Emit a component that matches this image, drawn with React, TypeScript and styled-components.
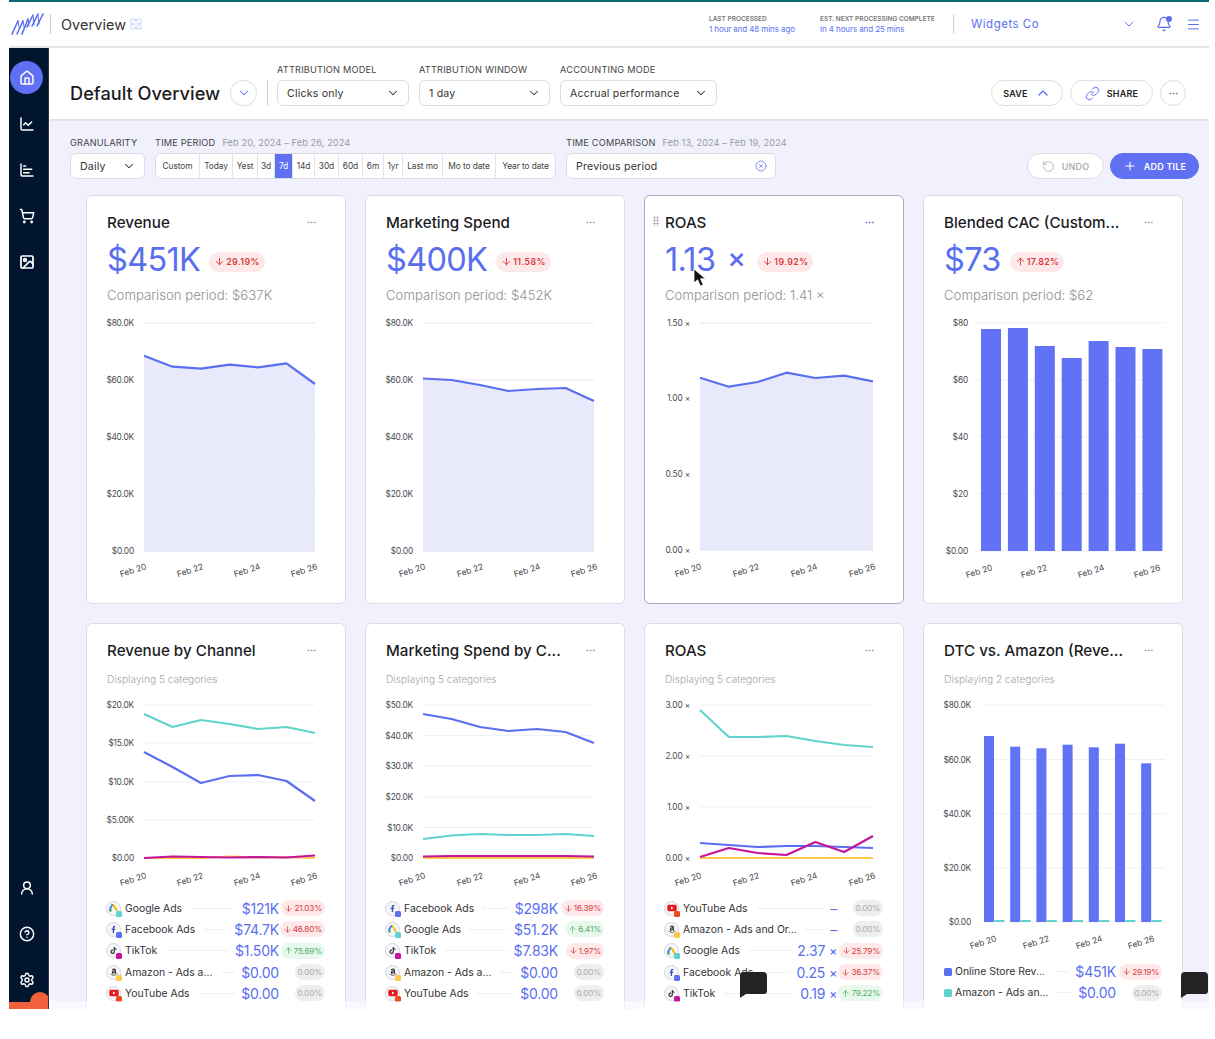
import React from "react";
import styled, { createGlobalStyle } from "styled-components";
import {
  ArrowDown, ArrowUp, Atom, Bell, ChartBar, ChartLine, ChevronDown, ChevronUp, CircleHelp, CircleX,
  Ellipsis, House, Image as ImageIcon, Link as LinkIcon, Menu, Plus, RotateCcw, Settings, ShoppingCart, UserRound,
} from "lucide-react";
import { FaAmazon, FaFacebookF, FaTiktok, FaYoutube } from "react-icons/fa";

const BLUE = "#5a6ff0";
const FONT = `Inter, "Noto Sans", "Liberation Sans", sans-serif`;

const Global = createGlobalStyle`
  html, body { margin: 0; padding: 0; background: #fff; }
  body { font-family: ${FONT}; color: #222; }
  * { box-sizing: border-box; }
`;

const Frame = styled.div`
  position: relative; width: 1200px; height: 1009px; margin-left: 9px; overflow: hidden;
  background: #fff; border-top: 2px solid #0b6a73; display: flex; flex-direction: column;
`;
const TopBar = styled.header`
  height: 46px; flex: none; display: flex; align-items: center; padding-left: 2px;
  background: #fff; border-bottom: 2px solid #e6e6ea;
`;
const Logo = styled.svg` width: 33px; height: 24px; flex: none; `;
const VRule = styled.div<{ $h: number; $ml: number }>`
  width: 1px; height: ${p => p.$h}px; margin-left: ${p => p.$ml}px; background: #cfcfd6; flex: none;
`;
const PageName = styled.div` margin-left: 10px; font-size: 14.4px; color: #333; letter-spacing: .1px; `;
const AtomWrap = styled.span` display: flex; margin-left: 3px; color: #bcc4f6; `;
const TopRight = styled.div` margin-left: auto; display: flex; align-items: center; padding-right: 8px; `;
const Status = styled.div<{ $w: number }>` width: ${p => p.$w}px; line-height: 10px; `;
const StatusLabel = styled.div` font-size: 6.5px; font-weight: 600; color: #777; white-space: nowrap; `;
const StatusValue = styled.div` font-size: 8px; color: ${BLUE}; white-space: nowrap; letter-spacing: -.1px; `;
const Company = styled.div` width: 150px; margin-left: 17px; font-size: 11.5px; color: ${BLUE}; letter-spacing: .5px; `;
const TopIcon = styled.span<{ $ml: number }>`
  position: relative; display: flex; margin-left: ${p => p.$ml}px; color: ${BLUE};
`;
const BellDot = styled.i`
  position: absolute; right: 0; top: 0; width: 6px; height: 6px; border-radius: 50%; background: ${BLUE};
`;

const Body = styled.div` flex: 1; display: flex; min-height: 0; `;
const Side = styled.nav`
  width: 40px; flex: none; background: #02152f; position: relative; overflow: hidden;
  display: flex; flex-direction: column; align-items: center; padding: 13px 0 0 0;
  border-right: 1px solid #333;
  margin-right: 1px;
`;
const SideItem = styled.div<{ $active?: boolean }>`
  width: 33px; height: 33px; flex: none; margin-left: -4px; margin-bottom: 13px; border-radius: 50%;
  display: flex; align-items: center; justify-content: center; color: #fff;
  background: ${p => (p.$active ? "#5f70f3" : "transparent")};
`;
const SideSpacer = styled.div` flex: 1; `;
const OrangeStrip = styled.div`
  position: absolute; left: 0; right: 0; bottom: 0; height: 7px; background: #f0603a;
`;
const OrangeDot = styled.div`
  position: absolute; left: 21px; bottom: -3px; width: 20px; height: 20px; border-radius: 50%; background: #f0603a;
`;

const Main = styled.main` flex: 1; min-width: 0; display: flex; flex-direction: column; background: #f0f1fd; `;
const SubBar = styled.div`
  height: 73px; flex: none; display: flex; align-items: flex-end; padding: 0 23px 13px 20px;
  background: #fff; border-bottom: 2px solid #e2e2ea;
`;
const PageTitle = styled.h1`
  margin: 0 0 1px; font-size: 18.2px; line-height: 24px; font-weight: 500; color: #1c1c1f; white-space: nowrap; width: 160px;
`;
const RoundBtn = styled.div<{ $w?: number; $c?: string }>`
  width: ${p => p.$w ?? 27}px; height: 26px; flex: none; border-radius: 50%; border: 1px solid #dedee4; background: #fff;
  display: flex; align-items: center; justify-content: center; color: ${p => p.$c ?? BLUE};
`;
const Field = styled.div<{ $ml?: number }>` margin-left: ${p => p.$ml ?? 0}px; flex: none; `;
const FieldLabel = styled.div`
  height: 12px; line-height: 12px; margin-bottom: 4px; font-size: 9.2px; color: #444; letter-spacing: .2px; white-space: nowrap;
`;
const DateHint = styled.span` margin-left: 7px; color: #9a9aa3; letter-spacing: .1px; `;
const Select = styled.div<{ $w: number }>`
  width: ${p => p.$w}px; height: 26px; border: 1px solid #dcdce3; border-radius: 6px; background: #fff;
  display: flex; align-items: center; justify-content: space-between; padding: 0 8px 0 9px;
  font-size: 10.6px; color: #333; letter-spacing: .2px; white-space: nowrap;
`;
const ActionRow = styled.div` margin-left: auto; display: flex; gap: 7px; `;
const PillBtn = styled.div<{ $w: number; $kind?: "plain" | "muted" | "primary" }>`
  width: ${p => p.$w}px; height: 26px; border-radius: 13px; display: flex; align-items: center; justify-content: center; gap: 7px;
  font-size: 9px; font-weight: 600; letter-spacing: .2px;
  border: 1px solid ${p => (p.$kind === "primary" ? "#5f70f3" : "#dedee4")};
  background: ${p => (p.$kind === "primary" ? "#5f70f3" : "#fff")};
  color: ${p => (p.$kind === "primary" ? "#fff" : p.$kind === "muted" ? "#b0b0b6" : "#222")};
  & > svg { color: ${p => (p.$kind === "primary" ? "#fff" : p.$kind === "muted" ? "#aaa" : BLUE)}; }
`;

const Content = styled.div` flex: 1; min-height: 0; padding: 15px 10px 0 20px; `;
const FilterRow = styled.div` display: flex; align-items: flex-end; height: 43px; `;
const Segments = styled.div`
  display: flex; height: 26px; border: 1px solid #dcdce3; border-radius: 6px; background: #fff; overflow: hidden;
`;
const Segment = styled.div<{ $w: number; $on?: boolean }>`
  width: ${p => p.$w}px; flex: none; display: flex; align-items: center; justify-content: center;
  font-size: 8.4px; letter-spacing: -.1px; white-space: nowrap;
  color: ${p => (p.$on ? "#fff" : "#444")}; background: ${p => (p.$on ? "#5f70f3" : "transparent")};
  & + & { border-left: 1px solid #e2e2e8; }
`;
const FilterActions = styled.div` margin-left: auto; display: flex; gap: 6px; `;

const Grid = styled.div`
  display: grid; grid-template-columns: repeat(4, 260px); column-gap: 19px; row-gap: 19px;
  margin: 16px 0 0 16px;
`;
const Card = styled.section<{ $h: number; $focus?: boolean }>`
  position: relative; height: ${p => p.$h}px; background: #fff; border-radius: 6px; padding-top: 16px;
  border: 1px solid ${p => (p.$focus ? "#a9a9ba" : "#dcdce8")};
`;
const CardTitleRow = styled.div`
  display: flex; align-items: center; justify-content: space-between; height: 20px; padding: 0 27px 0 20px;
`;
const CardTitle = styled.h2`
  margin: 0; font-size: 15.2px; font-weight: 500; color: #1c1c1f; white-space: nowrap;
`;
const Dots = styled.span<{ $on?: boolean }>` display: flex; margin-right: 1px; color: ${p => (p.$on ? BLUE : "#9a9aa3")}; `;
const DragHandle = styled.div`
  position: absolute; left: 8px; top: 20px; width: 6px; height: 10px;
  background-image: radial-gradient(#c0c0c8 1px, transparent 1.2px); background-size: 3px 3px;
`;
const KpiRow = styled.div` display: flex; align-items: center; height: 40px; margin-top: 8px; padding-left: 20px; `;
const KpiValue = styled.div`
  font-size: 32.5px; line-height: 40px; color: ${BLUE}; font-weight: 400; letter-spacing: -.7px; white-space: nowrap;
`;
const KpiUnit = styled.span`
  position: relative; top: -3px; margin: 0 3px 0 12px; font-size: 28px; font-weight: 500;
`;
const Delta = styled.div<{ $tone: "down" | "up" | "none"; $big?: boolean }>`
  display: flex; align-items: center; justify-content: center; gap: 1px; flex: none; white-space: nowrap;
  height: ${p => (p.$big ? 20 : 16)}px; border-radius: 10px;
  padding: 0 ${p => (p.$big ? 5 : 3)}px;
  font-size: ${p => (p.$big ? 8.8 : 8.2)}px; font-weight: ${p => (p.$big ? 600 : 400)};
  letter-spacing: ${p => (p.$big ? ".4px" : "-.2px")};
  margin: ${p => (p.$big ? "3px 0 0 9px" : "0")};
  color: ${p => (p.$tone === "down" ? "#d8393d" : p.$tone === "up" ? "#4fae6a" : "#aaa")};
  background: ${p => (p.$tone === "down" ? "#fde9e9" : p.$tone === "up" ? "#e9f8ec" : "#eeeeef")};
`;
const Comparison = styled.div`
  height: 20px; line-height: 20px; margin: 5px 0 10px; padding-left: 20px;
  font-size: 13.2px; font-weight: 300; color: #8f8f96; white-space: nowrap;
`;
const SubTitle = styled.div`
  height: 16px; line-height: 16px; margin: 11px 0 11px; padding-left: 20px; font-size: 10.2px; color: #a5a5ab; font-weight: 300;
`;
const ChartSvg = styled.svg` display: block; width: 258px; `;
const Legend = styled.div<{ $mt: number }>` margin-top: ${p => p.$mt}px; padding: 0 20px 0 19px; `;
const LegendRow = styled.div` display: flex; align-items: center; height: 21.3px; `;
const ChannelIcon = styled.span`
  position: relative; width: 15px; height: 15px; flex: none; border-radius: 50%; background: #f5f5fa;
  border: 1px solid #d6d6e0; display: flex; align-items: center; justify-content: center; font-size: 8px; color: #222;
`;
const ChannelBadge = styled.i<{ $c: string }>`
  position: absolute; right: -2px; bottom: -2px; width: 6px; height: 6px; border-radius: 1.5px; background: ${p => p.$c};
`;
const Swatch = styled.i<{ $c: string }>`
  width: 8px; height: 8px; flex: none; margin: 0 3px 0 1px; border-radius: 1.5px; background: ${p => p.$c};
`;
const LegendName = styled.span<{ $plain?: boolean }>`
  margin-left: ${p => (p.$plain ? 0 : 4)}px; font-size: 10.4px; color: #333; white-space: nowrap;
`;
const Leader = styled.span` flex: 1; min-width: 6px; margin: 0 6px 0 9px; border-top: 1px dotted #e4e4e8; `;
const LegendValue = styled.span`
  font-size: 14px; color: ${BLUE}; white-space: nowrap; letter-spacing: -.2px; font-weight: 400;
`;
const Times = styled.span` position: relative; top: -1px; font-size: 12px; margin-left: 4px; font-weight: 500; `;
const DeltaSlot = styled.span` width: 46px; flex: none; display: flex; justify-content: flex-end; `;

const BubbleSvg = styled.svg<{ $x: number }>`
  position: absolute; left: ${p => p.$x}px; top: 970px; width: 27px; height: 26px;
`;
const Pointer = styled.svg` position: absolute; left: 684px; top: 266px; width: 13px; height: 19px; `;
const FadeFoot = styled.div`
  position: absolute; left: 41px; right: 0; bottom: 0; height: 8px; background: rgba(255,255,255,.55);
`;

type Line = { c: string; w?: number; ys: number[] };
type ChartDef = {
  top: number; h: number; gx0: number; gx1: number; labelX: number;
  ticks: [number, string][]; xl: number[]; xlY: number;
  area?: boolean; lines?: Line[]; lx0?: number; lx1?: number;
  bars?: { x: number; w: number; step: number; base: number; tops: number[] };
  bars2?: { x: number; w: number; step: number; base: number; top: number; n: number };
};

const CHART_INK = "#4a4a50";

function Chart({ d }: { d: ChartDef }) {
  const lx0 = d.lx0 ?? d.gx0;
  const lx1 = d.lx1 ?? d.gx1;
  const pt = (ys: number[]) => ys.map((y, i) => `${lx0 + ((lx1 - lx0) * i) / (ys.length - 1)},${y}`).join(" ");
  const base = d.ticks[d.ticks.length - 1][0];
  return (
    <ChartSvg height={d.h} viewBox={`0 ${d.top} 258 ${d.h}`}>
      {d.area && d.lines && (
        <polygon points={`${lx0},${base} ${pt(d.lines[0].ys)} ${lx1},${base}`} fill="#e8eafb" />
      )}
      {d.ticks.map(([y, t]) => (
        <g key={t}>
          <line x1={d.gx0} x2={d.gx1} y1={y} y2={y} stroke={d.area ? "#e4e6f2" : "#eff0f4"} strokeWidth={1} />
          <text x={d.labelX} y={y + 3} textAnchor="end" fontSize={8.4} fill={CHART_INK} fontFamily={FONT} letterSpacing={-0.2}>{t}</text>
        </g>
      ))}
      {d.bars && d.bars.tops.map((t, i) => (
        <rect key={i} x={d.bars!.x + d.bars!.step * i} y={t} width={d.bars!.w} height={d.bars!.base - t} fill="#6272f5" />
      ))}
      {d.bars2 && Array.from({ length: d.bars2.n }, (_, i) => (
        <rect key={i} x={d.bars2!.x + d.bars2!.step * i} y={d.bars2!.top} width={d.bars2!.w} height={d.bars2!.base - d.bars2!.top} fill="#5fd3cc" />
      ))}
      {d.lines && d.lines.map((l, i) => (
        <polyline key={i} points={pt(l.ys)} fill="none" stroke={l.c} strokeWidth={l.w ?? 2.2} strokeLinejoin="round" />
      ))}
      {d.xl.map((x, i) => (
        <text key={i} x={x + 1} y={d.xlY + 1} textAnchor="middle" fontSize={8.4} fill={CHART_INK} fontFamily={FONT}
          transform={`rotate(-18 ${x + 1} ${d.xlY + 1})`}>{`Feb ${20 + i * 2}`}</text>
      ))}
    </ChartSvg>
  );
}

const TEAL = "#5fd3cc", MAG = "#c4149c", YEL = "#fcc94a", RED = "#ef4a1e";

const GoogleGlyph = () => (
  <svg width="9" height="8" viewBox="0 0 18 16">
    <path d="M7 1 2 10" stroke="#4285f4" strokeWidth="4" strokeLinecap="round" />
    <path d="M9 2l6 10" stroke="#fbbc05" strokeWidth="4" strokeLinecap="round" />
    <circle cx="3" cy="13" r="2.4" fill="#34a853" />
  </svg>
);

type Ch = "g" | "f" | "t" | "a" | "y";
const glyphs: Record<Ch, React.ReactNode> = {
  g: <GoogleGlyph />,
  f: <FaFacebookF size={7} color="#3b4fb8" />,
  t: <FaTiktok size={7} color="#333" />,
  a: <FaAmazon size={8} color="#222" />,
  y: <FaYoutube size={10} color="#e31b1b" />,
};
const badge: Record<Ch, string> = { g: TEAL, f: "#5b6ff0", t: MAG, a: YEL, y: RED };

type Row = { ch?: Ch; sw?: string; name: string; val: string; x?: boolean; d: string; tone: "down" | "up" | "none" };

function DeltaIcon({ tone, size }: { tone: "down" | "up" | "none"; size: number }) {
  if (tone === "down") return <ArrowDown size={size} strokeWidth={2} />;
  if (tone === "up") return <ArrowUp size={size} strokeWidth={2} />;
  return null;
}

function LegendList({ rows, mt }: { rows: Row[]; mt: number }) {
  return (
    <Legend $mt={mt}>
      {rows.map(r => (
        <LegendRow key={r.name}>
          {r.ch ? (
            <ChannelIcon>{glyphs[r.ch]}<ChannelBadge $c={badge[r.ch]} /></ChannelIcon>
          ) : (
            <Swatch $c={r.sw!} />
          )}
          <LegendName $plain={!r.ch}>{r.name}</LegendName>
          <Leader />
          <LegendValue>{r.val}{r.x && <Times>×</Times>}</LegendValue>
          <DeltaSlot>
            <Delta $tone={r.tone}><DeltaIcon tone={r.tone} size={9} />{r.d}</Delta>
          </DeltaSlot>
        </LegendRow>
      ))}
    </Legend>
  );
}

const USD80: [number, string][] = [[323, "$80.0K"], [380, "$60.0K"], [436.7, "$40.0K"], [493.7, "$20.0K"], [551, "$0.00"]];

const kpis: {
  title: string; value: string; unit?: boolean; delta: string; tone: "down" | "up"; comp: string; focus?: boolean; chart: ChartDef;
}[] = [
  {
    title: "Revenue", value: "$451K", delta: "29.19%", tone: "down", comp: "Comparison period: $637K",
    chart: { top: 315, h: 275, gx0: 57, gx1: 228, labelX: 47, ticks: USD80, xl: [46, 103, 160, 217], xlY: 572, area: true,
      lines: [{ c: BLUE, ys: [355.7, 366.7, 368.7, 364.7, 367.3, 363.3, 384] }] },
  },
  {
    title: "Marketing Spend", value: "$400K", delta: "11.58%", tone: "down", comp: "Comparison period: $452K",
    chart: { top: 315, h: 275, gx0: 57, gx1: 228, labelX: 47, ticks: USD80, xl: [46, 104, 161, 218], xlY: 572, area: true,
      lines: [{ c: BLUE, ys: [378.5, 380, 385, 391, 389, 388, 401] }] },
  },
  {
    title: "ROAS", value: "1.13", unit: true, delta: "19.92%", tone: "down", comp: "Comparison period: 1.41 ×", focus: true,
    chart: { top: 315, h: 275, gx0: 55, gx1: 228, labelX: 45, ticks: [[323, "1.50 ×"], [398, "1.00 ×"], [474, "0.50 ×"], [550, "0.00 ×"]],
      xl: [43, 101, 159, 217], xlY: 572, area: true, lines: [{ c: BLUE, ys: [377.7, 386.7, 382, 372.7, 378, 375.7, 381.3] }] },
  },
  {
    title: "Blended CAC (Custom...", value: "$73", delta: "17.82%", tone: "up", comp: "Comparison period: $62",
    chart: { top: 315, h: 275, gx0: 51, gx1: 241, labelX: 44, ticks: [[323, "$80"], [380, "$60"], [436.7, "$40"], [493.7, "$20"], [551, "$0.00"]],
      xl: [55, 110, 167, 223], xlY: 573,
      bars: { x: 57, w: 20, step: 26.9, base: 551, tops: [329, 328, 346, 358, 341, 347, 349] } },
  },
];

const channelCards: { title: string; sub: string; chart: ChartDef; rows: Row[]; mt: number }[] = [
  {
    title: "Revenue by Channel", sub: "Displaying 5 categories", mt: 2.5,
    chart: { top: 698, h: 197, gx0: 57, gx1: 228, labelX: 47, ticks: [[705, "$20.0K"], [743, "$15.0K"], [782, "$10.0K"], [820, "$5.00K"], [858, "$0.00"]],
      xl: [46, 103, 160, 217], xlY: 881, lines: [
        { c: TEAL, ys: [714, 727, 720, 724, 729, 727, 733] },
        { c: BLUE, ys: [752, 767, 783, 776, 775, 781, 801] },
        { c: YEL, ys: [858, 858, 858, 856.5, 857.5, 857, 858] },
        { c: MAG, ys: [858, 856.5, 857, 857.5, 857, 857.5, 855.5] },
      ] },
    rows: [
      { ch: "g", name: "Google Ads", val: "$121K", d: "21.03%", tone: "down" },
      { ch: "f", name: "Facebook Ads", val: "$74.7K", d: "46.80%", tone: "down" },
      { ch: "t", name: "TikTok", val: "$1.50K", d: "75.69%", tone: "up" },
      { ch: "a", name: "Amazon - Ads a...", val: "$0.00", d: "0.00%", tone: "none" },
      { ch: "y", name: "YouTube Ads", val: "$0.00", d: "0.00%", tone: "none" },
    ],
  },
  {
    title: "Marketing Spend by C...", sub: "Displaying 5 categories", mt: 2.5,
    chart: { top: 698, h: 197, gx0: 57, gx1: 228, labelX: 47, ticks: [[705, "$50.0K"], [735.6, "$40.0K"], [766, "$30.0K"], [797, "$20.0K"], [827.6, "$10.0K"], [858, "$0.00"]],
      xl: [46, 104, 161, 218], xlY: 881, lines: [
        { c: BLUE, ys: [714, 719, 727, 731, 729, 732, 743] },
        { c: TEAL, ys: [839, 835.5, 834, 835, 835, 834, 836] },
        { c: YEL, ys: [858, 858, 858, 858, 858, 858, 858] },
        { c: MAG, ys: [856.5, 856, 856, 856, 856, 856, 856.5] },
      ] },
    rows: [
      { ch: "f", name: "Facebook Ads", val: "$298K", d: "16.39%", tone: "down" },
      { ch: "g", name: "Google Ads", val: "$51.2K", d: "6.41%", tone: "up" },
      { ch: "t", name: "TikTok", val: "$7.83K", d: "1.97%", tone: "down" },
      { ch: "a", name: "Amazon - Ads a...", val: "$0.00", d: "0.00%", tone: "none" },
      { ch: "y", name: "YouTube Ads", val: "$0.00", d: "0.00%", tone: "none" },
    ],
  },
  {
    title: "ROAS", sub: "Displaying 5 categories", mt: 2.5,
    chart: { top: 698, h: 197, gx0: 55, gx1: 228, labelX: 45, ticks: [[705, "3.00 ×"], [756, "2.00 ×"], [807, "1.00 ×"], [858, "0.00 ×"]],
      xl: [43, 101, 159, 217], xlY: 881, lines: [
        { c: TEAL, ys: [710, 737, 737, 736, 741, 745, 747] },
        { c: YEL, ys: [858, 858, 858, 858, 858, 858, 858] },
        { c: BLUE, ys: [843, 845, 847, 846, 846, 847, 848] },
        { c: MAG, ys: [857, 848, 853, 855, 842, 852, 836] },
      ] },
    rows: [
      { ch: "y", name: "YouTube Ads", val: "–", d: "0.00%", tone: "none" },
      { ch: "a", name: "Amazon - Ads and Or...", val: "–", d: "0.00%", tone: "none" },
      { ch: "g", name: "Google Ads", val: "2.37", x: true, d: "25.79%", tone: "down" },
      { ch: "f", name: "Facebook Ads", val: "0.25", x: true, d: "36.37%", tone: "down" },
      { ch: "t", name: "TikTok", val: "0.19", x: true, d: "79.22%", tone: "up" },
    ],
  },
  {
    title: "DTC vs. Amazon (Reve...", sub: "Displaying 2 categories", mt: 0,
    chart: { top: 698, h: 263, gx0: 58, gx1: 241, labelX: 47, ticks: [[705, "$80.0K"], [759.5, "$60.0K"], [813.6, "$40.0K"], [868, "$20.0K"], [922, "$0.00"]],
      xl: [59, 112, 165, 217], xlY: 944,
      bars: { x: 60, w: 10, step: 26.2, base: 922, tops: [736, 746.7, 748.3, 744.7, 747.3, 743.7, 763.3] },
      bars2: { x: 70.5, w: 10, step: 26.2, base: 922, top: 920, n: 7 } },
    rows: [
      { sw: "#5b6ff0", name: "Online Store Rev...", val: "$451K", d: "29.19%", tone: "down" },
      { sw: TEAL, name: "Amazon - Ads an...", val: "$0.00", d: "0.00%", tone: "none" },
    ],
  },
];

const periods: [string, number][] = [
  ["Custom", 43], ["Today", 33], ["Yest", 25], ["3d", 17], ["7d", 18], ["14d", 22], ["30d", 24], ["60d", 24],
  ["6m", 21], ["1yr", 19], ["Last mo", 40], ["Mo to date", 53], ["Year to date", 60],
];

export default function App() {
  return (
    <>
      <Global />
      <Frame>
        <TopBar>
          <Logo viewBox="0 0 33 24" fill="none" stroke={BLUE} strokeWidth="1.6" strokeLinecap="round">
            <path d="M1 22 7 9M6 22l6-13M11 22l6-15M16 15l6-12M21 14l6-12M26 14l6-12" />
            <path d="M7 9l1 6M12 9l1 6M17 7l1 7M22 4l1 9M27 3l1 9" strokeWidth="1" />
          </Logo>
          <VRule $h={20} $ml={6} />
          <PageName>Overview</PageName>
          <AtomWrap><Atom size={14} strokeWidth={1.5} /></AtomWrap>
          <TopRight>
            <Status $w={111}>
              <StatusLabel>LAST PROCESSED</StatusLabel>
              <StatusValue>1 hour and 48 mins ago</StatusValue>
            </Status>
            <Status $w={133}>
              <StatusLabel>EST. NEXT PROCESSING COMPLETE</StatusLabel>
              <StatusValue>In 4 hours and 25 mins</StatusValue>
            </Status>
            <VRule $h={20} $ml={0} />
            <Company>Widgets Co</Company>
            <TopIcon $ml={0}><ChevronDown size={16} strokeWidth={1.4} /></TopIcon>
            <TopIcon $ml={19}><Bell size={16} strokeWidth={1.8} /><BellDot /></TopIcon>
            <TopIcon $ml={14}><Menu size={15} strokeWidth={1.6} /></TopIcon>
          </TopRight>
        </TopBar>
        <Body>
          <Side>
            <SideItem $active><House size={16} strokeWidth={2.2} /></SideItem>
            <SideItem><ChartLine size={16} strokeWidth={2.2} /></SideItem>
            <SideItem><ChartBar size={16} strokeWidth={2.2} /></SideItem>
            <SideItem><ShoppingCart size={16} strokeWidth={2.2} /></SideItem>
            <SideItem><ImageIcon size={16} strokeWidth={2.6} /></SideItem>
            <SideSpacer />
            <SideItem><UserRound size={16} strokeWidth={2.2} /></SideItem>
            <SideItem><CircleHelp size={16} strokeWidth={2.2} /></SideItem>
            <SideItem><Settings size={16} strokeWidth={2.2} /></SideItem>
            <OrangeStrip />
            <OrangeDot />
          </Side>
          <Main>
            <SubBar>
              <PageTitle>Default Overview</PageTitle>
              <RoundBtn><ChevronDown size={14} strokeWidth={1.8} /></RoundBtn>
              <VRule $h={26} $ml={10} />
              <Field $ml={9}>
                <FieldLabel>ATTRIBUTION MODEL</FieldLabel>
                <Select $w={132}>Clicks only <ChevronDown size={14} strokeWidth={1.8} /></Select>
              </Field>
              <Field $ml={10}>
                <FieldLabel>ATTRIBUTION WINDOW</FieldLabel>
                <Select $w={131}>1 day <ChevronDown size={14} strokeWidth={1.8} /></Select>
              </Field>
              <Field $ml={10}>
                <FieldLabel>ACCOUNTING MODE</FieldLabel>
                <Select $w={157}>Accrual performance <ChevronDown size={14} strokeWidth={1.8} /></Select>
              </Field>
              <ActionRow>
                <PillBtn $w={72}>SAVE <ChevronUp size={16} strokeWidth={2} /></PillBtn>
                <PillBtn $w={83}><LinkIcon size={15} strokeWidth={1.6} /> SHARE</PillBtn>
                <RoundBtn $w={26} $c="#7a7f9a"><Ellipsis size={11} /></RoundBtn>
              </ActionRow>
            </SubBar>
            <Content>
              <FilterRow>
                <Field>
                  <FieldLabel>GRANULARITY</FieldLabel>
                  <Select $w={75}>Daily <ChevronDown size={14} strokeWidth={1.8} /></Select>
                </Field>
                <Field $ml={10}>
                  <FieldLabel>TIME PERIOD<DateHint>Feb 20, 2024 – Feb 26, 2024</DateHint></FieldLabel>
                  <Segments>
                    {periods.map(([t, w]) => <Segment key={t} $w={w} $on={t === "7d"}>{t}</Segment>)}
                  </Segments>
                </Field>
                <Field $ml={10}>
                  <FieldLabel>TIME COMPARISON<DateHint>Feb 13, 2024 – Feb 19, 2024</DateHint></FieldLabel>
                  <Select $w={210}>Previous period <CircleX size={12} color={BLUE} strokeWidth={1.5} /></Select>
                </Field>
                <FilterActions>
                  <PillBtn $w={77} $kind="muted"><RotateCcw size={13} strokeWidth={1.5} /> UNDO</PillBtn>
                  <PillBtn $w={89} $kind="primary"><Plus size={14} strokeWidth={1.8} /> ADD TILE</PillBtn>
                </FilterActions>
              </FilterRow>
              <Grid>
                {kpis.map(k => (
                  <Card key={k.title} $h={409} $focus={k.focus}>
                    {k.focus && <DragHandle />}
                    <CardTitleRow>
                      <CardTitle>{k.title}</CardTitle>
                      <Dots $on={k.focus}><Ellipsis size={11} /></Dots>
                    </CardTitleRow>
                    <KpiRow>
                      <KpiValue>{k.value}{k.unit && <KpiUnit>×</KpiUnit>}</KpiValue>
                      <Delta $big $tone={k.tone === "up" ? "down" : k.tone}>
                        <DeltaIcon tone={k.tone} size={11} />{k.delta}
                      </Delta>
                    </KpiRow>
                    <Comparison>{k.comp}</Comparison>
                    <Chart d={k.chart} />
                  </Card>
                ))}
                {channelCards.map(c => (
                  <Card key={c.title + c.sub + c.rows[0].name} $h={400}>
                    <CardTitleRow>
                      <CardTitle>{c.title}</CardTitle>
                      <Dots><Ellipsis size={11} /></Dots>
                    </CardTitleRow>
                    <SubTitle>{c.sub}</SubTitle>
                    <Chart d={c.chart} />
                    <LegendList rows={c.rows} mt={c.mt} />
                  </Card>
                ))}
              </Grid>
            </Content>
          </Main>
        </Body>
        <FadeFoot />
        <Pointer viewBox="0 0 13 19">
          <path d="M1 1v14l3.6-3.2L7.4 18l2.8-1.2-2.7-6H12.5z" fill="#111" stroke="#fff" strokeWidth=".8" />
        </Pointer>
        <BubbleSvg $x={731} viewBox="0 0 27 26"><path d="M4 0h19a4 4 0 0 1 4 4v15a3 3 0 0 1-3 3H6l-6 4V4a4 4 0 0 1 4-4z" fill="#232326" /></BubbleSvg>
        <BubbleSvg $x={1172} viewBox="0 0 27 26"><path d="M4 0h19a4 4 0 0 1 4 4v15a3 3 0 0 1-3 3H6l-6 4V4a4 4 0 0 1 4-4z" fill="#232326" /></BubbleSvg>
      </Frame>
    </>
  );
}
